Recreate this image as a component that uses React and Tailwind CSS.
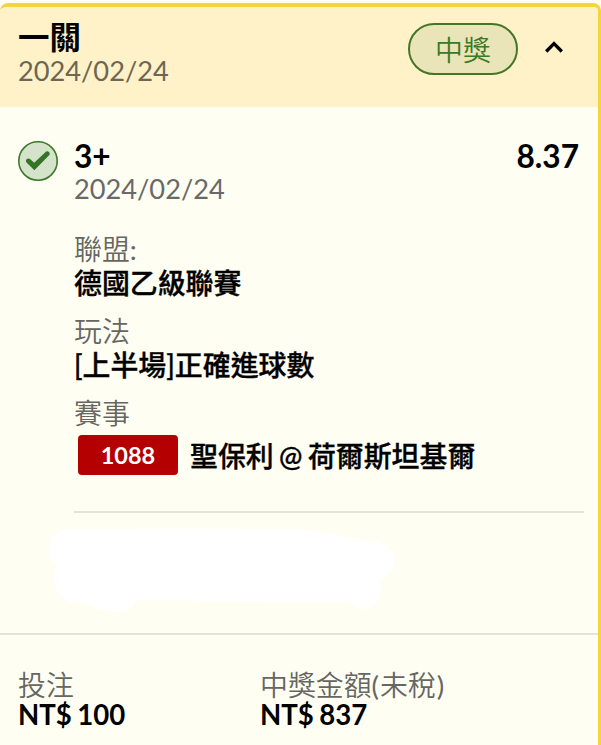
const match = {
  pick: '3+',
  odds: '8.37',
  date: '2024/02/24',
  league: '德國乙級聯賽',
  market: '[上半場]正確進球數',
  code: '1088',
  teams: '聖保利 @ 荷爾斯坦基爾',
};

function Field({ label, children }) {
  return (
    <div>
      <div className="font-[350] text-[#666662]">{label}</div>
      <div className="font-medium text-black [-webkit-text-stroke:0.35px_#000]">{children}</div>
    </div>
  );
}

function Amount({ label, value }) {
  return (
    <div className="leading-[30px]">
      <div className="font-[350] text-[#666662]">{label}</div>
      <div className="text-[27.6px] font-bold text-black [word-spacing:-1.2px]">{value}</div>
    </div>
  );
}

function CheckBadge() {
  return (
    <svg className="w-10 h-10 shrink-0" viewBox="0 0 40 40" fill="none">
      <circle cx="20" cy="20" r="19.2" fill="#d6e3cb" stroke="#3b7a2a" strokeWidth="1.6" />
      <path
        d="M8.3 18.6 C9.6 17 11.5 17.2 12.6 18.4 L16.2 21.7 L27.6 10.9 C29.5 9.3 32.5 11.5 31.6 13.8 L16.4 29.2 L8.7 21.7 C7.8 20.7 7.7 19.6 8.3 18.6 Z"
        fill="#347424"
      />
    </svg>
  );
}

// White brush strokes that hide the ticket number
function Redaction() {
  return (
    <svg className="block ml-[46px] w-[352px] h-[88px]" viewBox="46 525 352 88" fill="#fff">
      <path d="M70 529 Q180 528 295 529 Q330 533 368 541 C383 541 395 550 395 561 C394 571 385 578 380 581 C383 595 376 609 364 609 C356 609 352 602 343 602 L136 600 C133 608 128 613 118 612 C104 613 92 605 80 603 C62 604 51 588 55 570 C57 568 60 568 57 565 C49 561 49 551 50 546 C50 538 56 529 70 529 Z" />
    </svg>
  );
}

export default function App() {
  return (
    <div className="w-[601px] h-[745px] pt-[3px] overflow-hidden bg-[#fffef3] text-[27.9px] leading-[34px] font-['Lato','Noto_Sans_CJK_TC',sans-serif]">
      <div className="w-[601px] h-[760px] border-t-4 border-r-[3px] border-[#f5d63a] rounded-t-lg overflow-hidden">
        <header className="flex h-[100px] pl-[18px] bg-[#fff1c8]">
          <div className="pt-[13px]">
            <div className="text-[31.5px] font-bold text-black">一關</div>
            <div className="text-[27.2px] text-[#6c6653]">2024/02/24</div>
          </div>
          <div className="ml-auto mt-4 w-[110px] h-[52px] pt-[2px] flex items-center justify-center rounded-full border-2 border-[#457628] bg-[#e9e5b9] font-[350] text-[#3b7a25]">
            中獎
          </div>
          <svg className="ml-[27px] mr-[35px] mt-[33px] w-[18px] h-4" viewBox="0 0 18 16" fill="none">
            <path d="M1.2 11.5 L9 3.5 L16.8 11.5" stroke="#000" strokeWidth="3.3" />
          </svg>
        </header>

        <section className="flex h-[404px] ml-[18px] pt-[34px]">
          <CheckBadge />
          <div className="flex-1 ml-4 -mt-[2px]">
            <div className="flex justify-between pr-[19px] text-[31.6px] font-bold text-black">
              <span>{match.pick}</span>
              <span>{match.odds}</span>
            </div>
            <div className="-mt-px text-[27.2px] text-[#696967]">{match.date}</div>
            <div className="mt-[26px] flex flex-col gap-[14px]">
              <Field label={<>聯盟<span className="font-normal">:</span></>}>{match.league}</Field>
              <Field label="玩法">{match.market}</Field>
              <Field label="賽事">
                <div className="flex items-center mt-[5px] ml-1">
                  <span className="w-[100px] h-10 mr-3 flex items-center justify-center rounded bg-[#b40000] text-[23.5px] font-bold text-white [-webkit-text-stroke:0px]">
                    {match.code}
                  </span>
                  <span className="pt-[2px] whitespace-nowrap [word-spacing:-1.6px]">{match.teams}</span>
                </div>
              </Field>
            </div>
          </div>
        </section>
        <div className="h-[2px] ml-[74px] mr-[14px] bg-[#e4e3da]" />

        <div className="h-[120px] pt-3">
          <Redaction />
        </div>

        <footer className="flex border-t-2 border-[#e4e3da] pt-[35px] pl-[18px]">
          <div className="w-[242px]">
            <Amount label="投注" value="NT$ 100" />
          </div>
          <Amount
            label={
              <>
                中獎金額<span className="font-normal mr-px">(</span>未稅<span className="font-normal ml-px">)</span>
              </>
            }
            value="NT$ 837"
          />
        </footer>
      </div>
    </div>
  );
}
